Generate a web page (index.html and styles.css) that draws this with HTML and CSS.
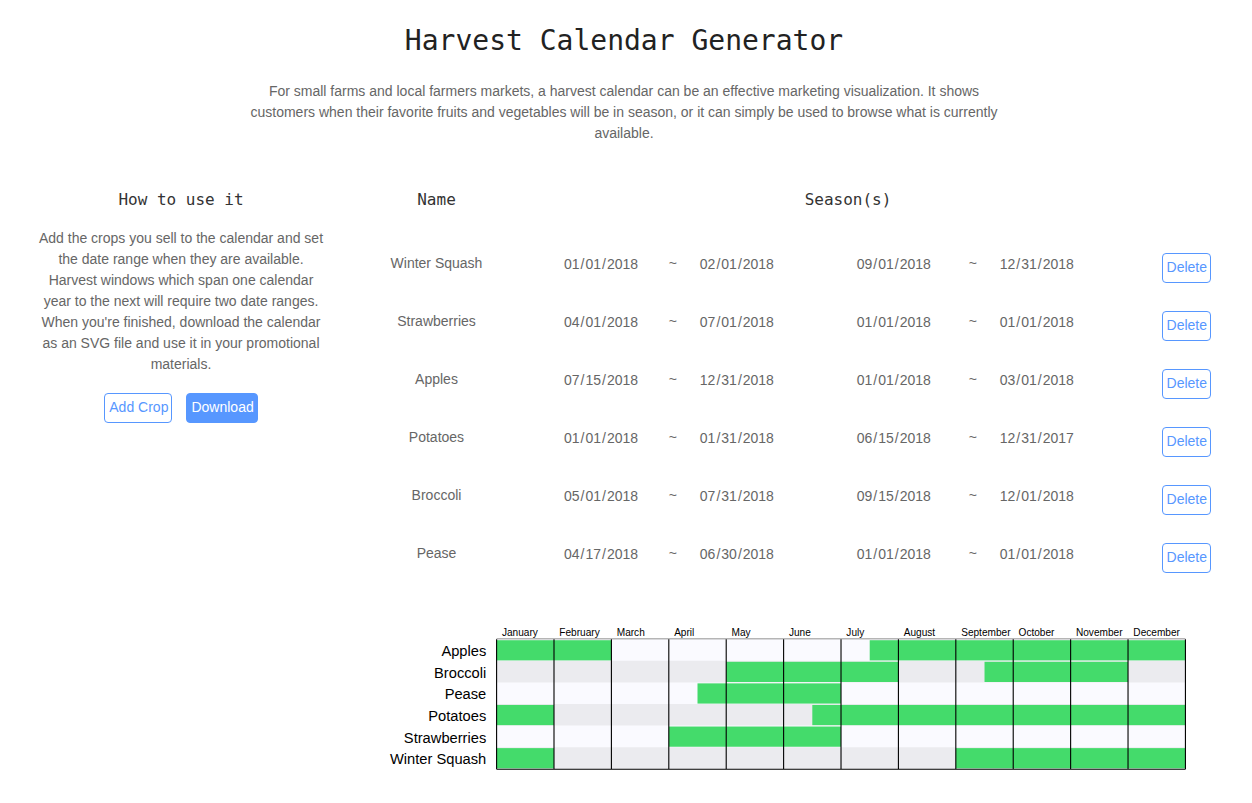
FILE: index.html
```html
<!DOCTYPE html>
<html lang="en">
<head>
<meta charset="utf-8">
<title>Harvest Calendar Generator</title>
<link rel="stylesheet" href="styles.css">
</head>
<body>
<header class="intro">
  <h1 class="title">Harvest Calendar Generator</h1>
  <p class="lead">For small farms and local farmers markets, a harvest calendar can be an effective marketing visualization. It shows customers when their favorite fruits and vegetables will be in season, or it can simply be used to browse what is currently available.</p>
</header>
<main class="layout">
  <section class="help">
    <h2 class="heading">How to use it</h2>
    <p class="help-text">Add the crops you sell to the calendar and set the date range when they are available. Harvest windows which span one calendar year to the next will require two date ranges. When you're finished, download the calendar as an SVG file and use it in your promotional materials.</p>
    <div class="actions">
      <button class="button" type="button">Add Crop</button>
      <button class="button button-primary" type="button">Download</button>
    </div>
  </section>
  <section class="calendar">
    <table class="crops">
      <colgroup>
        <col class="col-name"><col class="col-start"><col class="col-tilde"><col class="col-end"><col class="col-start-second"><col class="col-tilde"><col><col class="col-delete">
      </colgroup>
      <thead>
        <tr><th class="heading" scope="col">Name</th><th class="heading" scope="colgroup" colspan="7">Season(s)</th></tr>
      </thead>
      <tbody>
        <tr>
          <td><input class="field name" type="text" aria-label="Crop name" value="Winter Squash"></td>
          <td class="start"><input class="field" type="date" aria-label="First season start" value="2018-01-01"></td><td>~</td>
          <td class="end"><input class="field" type="date" aria-label="First season end" value="2018-02-01"></td>
          <td class="start-second"><input class="field" type="date" aria-label="Second season start" value="2018-09-01"></td><td>~</td>
          <td class="end"><input class="field" type="date" aria-label="Second season end" value="2018-12-31"></td>
          <td class="remove"><button class="button" type="button">Delete</button></td>
        </tr>
        <tr>
          <td><input class="field name" type="text" aria-label="Crop name" value="Strawberries"></td>
          <td class="start"><input class="field" type="date" aria-label="First season start" value="2018-04-01"></td><td>~</td>
          <td class="end"><input class="field" type="date" aria-label="First season end" value="2018-07-01"></td>
          <td class="start-second"><input class="field" type="date" aria-label="Second season start" value="2018-01-01"></td><td>~</td>
          <td class="end"><input class="field" type="date" aria-label="Second season end" value="2018-01-01"></td>
          <td class="remove"><button class="button" type="button">Delete</button></td>
        </tr>
        <tr>
          <td><input class="field name" type="text" aria-label="Crop name" value="Apples"></td>
          <td class="start"><input class="field" type="date" aria-label="First season start" value="2018-07-15"></td><td>~</td>
          <td class="end"><input class="field" type="date" aria-label="First season end" value="2018-12-31"></td>
          <td class="start-second"><input class="field" type="date" aria-label="Second season start" value="2018-01-01"></td><td>~</td>
          <td class="end"><input class="field" type="date" aria-label="Second season end" value="2018-03-01"></td>
          <td class="remove"><button class="button" type="button">Delete</button></td>
        </tr>
        <tr>
          <td><input class="field name" type="text" aria-label="Crop name" value="Potatoes"></td>
          <td class="start"><input class="field" type="date" aria-label="First season start" value="2018-01-01"></td><td>~</td>
          <td class="end"><input class="field" type="date" aria-label="First season end" value="2018-01-31"></td>
          <td class="start-second"><input class="field" type="date" aria-label="Second season start" value="2018-06-15"></td><td>~</td>
          <td class="end"><input class="field" type="date" aria-label="Second season end" value="2017-12-31"></td>
          <td class="remove"><button class="button" type="button">Delete</button></td>
        </tr>
        <tr>
          <td><input class="field name" type="text" aria-label="Crop name" value="Broccoli"></td>
          <td class="start"><input class="field" type="date" aria-label="First season start" value="2018-05-01"></td><td>~</td>
          <td class="end"><input class="field" type="date" aria-label="First season end" value="2018-07-31"></td>
          <td class="start-second"><input class="field" type="date" aria-label="Second season start" value="2018-09-15"></td><td>~</td>
          <td class="end"><input class="field" type="date" aria-label="Second season end" value="2018-12-01"></td>
          <td class="remove"><button class="button" type="button">Delete</button></td>
        </tr>
        <tr>
          <td><input class="field name" type="text" aria-label="Crop name" value="Pease"></td>
          <td class="start"><input class="field" type="date" aria-label="First season start" value="2018-04-17"></td><td>~</td>
          <td class="end"><input class="field" type="date" aria-label="First season end" value="2018-06-30"></td>
          <td class="start-second"><input class="field" type="date" aria-label="Second season start" value="2018-01-01"></td><td>~</td>
          <td class="end"><input class="field" type="date" aria-label="Second season end" value="2018-01-01"></td>
          <td class="remove"><button class="button" type="button">Delete</button></td>
        </tr>
      </tbody>
    </table>
    <svg class="chart" viewBox="0 0 896 164" role="img" aria-label="Harvest calendar">
      <g class="months">
        <text x="124" y="17">January</text><text x="186.5" y="17">February</text><text x="249" y="17">March</text><text x="311.5" y="17">April</text><text x="374" y="17">May</text><text x="436.5" y="17">June</text><text x="499" y="17">July</text><text x="561.5" y="17">August</text><text x="624" y="17">September</text><text x="686.5" y="17">October</text><text x="749" y="17">November</text><text x="811.5" y="17">December</text>
      </g>
      <g class="labels">
        <text x="107" y="39">Apples</text><text x="107" y="63">Broccoli</text><text x="107" y="86.5">Pease</text><text x="107" y="109.5">Potatoes</text><text x="107" y="133.5">Strawberries</text><text x="107" y="156.5">Winter Squash</text>
      </g>
      <g transform="translate(118.2 21)">
        <rect class="band" width="750" height="141"/>
        <path class="band-alt" d="M0 23.5h750v23.5H0zM0 70.5h750v23.5H0zM0 117.5h750v23.5H0z"/>
        <g class="seasons">
          <rect x="0" y="1" width="125" height="22"/><rect x="406.25" y="1" width="343.75" height="22"/>
          <rect x="250" y="24.5" width="187.5" height="22"/><rect x="531.25" y="24.5" width="156.25" height="22"/>
          <rect x="218.75" y="48" width="156.25" height="22"/>
          <rect x="0" y="71.5" width="62.5" height="22"/><rect x="343.75" y="71.5" width="406.25" height="22"/>
          <rect x="187.5" y="95" width="187.5" height="22"/>
          <rect x="0" y="118.5" width="62.5" height="22"/><rect x="500" y="118.5" width="250" height="22"/>
        </g>
        <path class="rule-top" d="M0 -0.5h750"/>
        <path class="rules" d="M0 141.5h750M0 0v141.5M62.5 0v141.5M125 0v141.5M187.5 0v141.5M250 0v141.5M312.5 0v141.5M375 0v141.5M437.5 0v141.5M500 0v141.5M562.5 0v141.5M625 0v141.5M687.5 0v141.5M750 0v141.5"/>
      </g>
    </svg>
  </section>
</main>
</body>
</html>
```
FILE: styles.css
```css
* { box-sizing: border-box; }

body {
  margin: 0;
  background: #fff;
  color: #666;
  font: 14px/21px "Liberation Sans", Arial, sans-serif;
  text-align: center;
}

.intro { padding: 21px 4px 0 0; }

.title {
  margin: 0 0 20px;
  color: #222;
  font: 400 28px/40px "DejaVu Sans Mono", monospace;
}

.lead {
  max-width: 760px;
  margin: 0 auto;
}

.layout {
  display: grid;
  grid-template-columns: 302px minmax(0, 1fr);
  gap: 56px;
  padding: 44px 41px 0 30px;
}

.help { padding: 0 6px; }

.heading {
  margin: 0;
  padding: 0;
  color: #333;
  font: 400 16px/24px "DejaVu Sans Mono", monospace;
}

.help-text { margin: 16px 0 18px; }

.actions {
  display: flex;
  justify-content: center;
  gap: 14px;
}

.button {
  height: 30px;
  padding: 0 3px 2px 4px;
  border: 1px solid #5797ff;
  border-radius: 4px;
  background: #fff;
  color: #5797ff;
  font: inherit;
}

.button-primary {
  background: #5797ff;
  color: #fff;
}

.crops {
  width: 100%;
  table-layout: fixed;
  border-collapse: collapse;
}

.crops thead tr { height: 49px; }
.crops th, .crops td { vertical-align: top; }
.crops td { height: 58px; padding: 16px 0 12px; }

.col-name { width: 97px; }
.col-start { width: 21%; }
.col-tilde { width: 30px; }
.col-end { width: 18.1%; }
.col-start-second { width: 14.7%; }
.col-delete { width: 69px; }

.crops .start { padding-left: 78px; text-align: left; }
.crops .end { padding-left: 11px; text-align: left; }
.crops .start-second { padding-left: 19px; text-align: left; }
.crops .remove { text-align: right; }

.field {
  height: 22px;
  padding: 0;
  border: 0;
  background: none;
  color: inherit;
  font: inherit;
  vertical-align: top;
}

.name {
  width: 100%;
  height: 21px;
  text-align: center;
}

.field::-webkit-calendar-picker-indicator { display: none; }

.chart {
  display: block;
  width: 100%;
  height: auto;
  margin-top: 35px;
  font-family: "Liberation Sans", Arial, sans-serif;
}

.months { font-size: 11px; }
.labels { font-size: 16px; text-anchor: end; }
.band { fill: #fafaff; }
.band-alt { fill: #ebebef; }
.seasons { fill: #44db6b; }
.rules { stroke: #000; stroke-width: 1.2; }
.rule-top { stroke: #888; }
```
